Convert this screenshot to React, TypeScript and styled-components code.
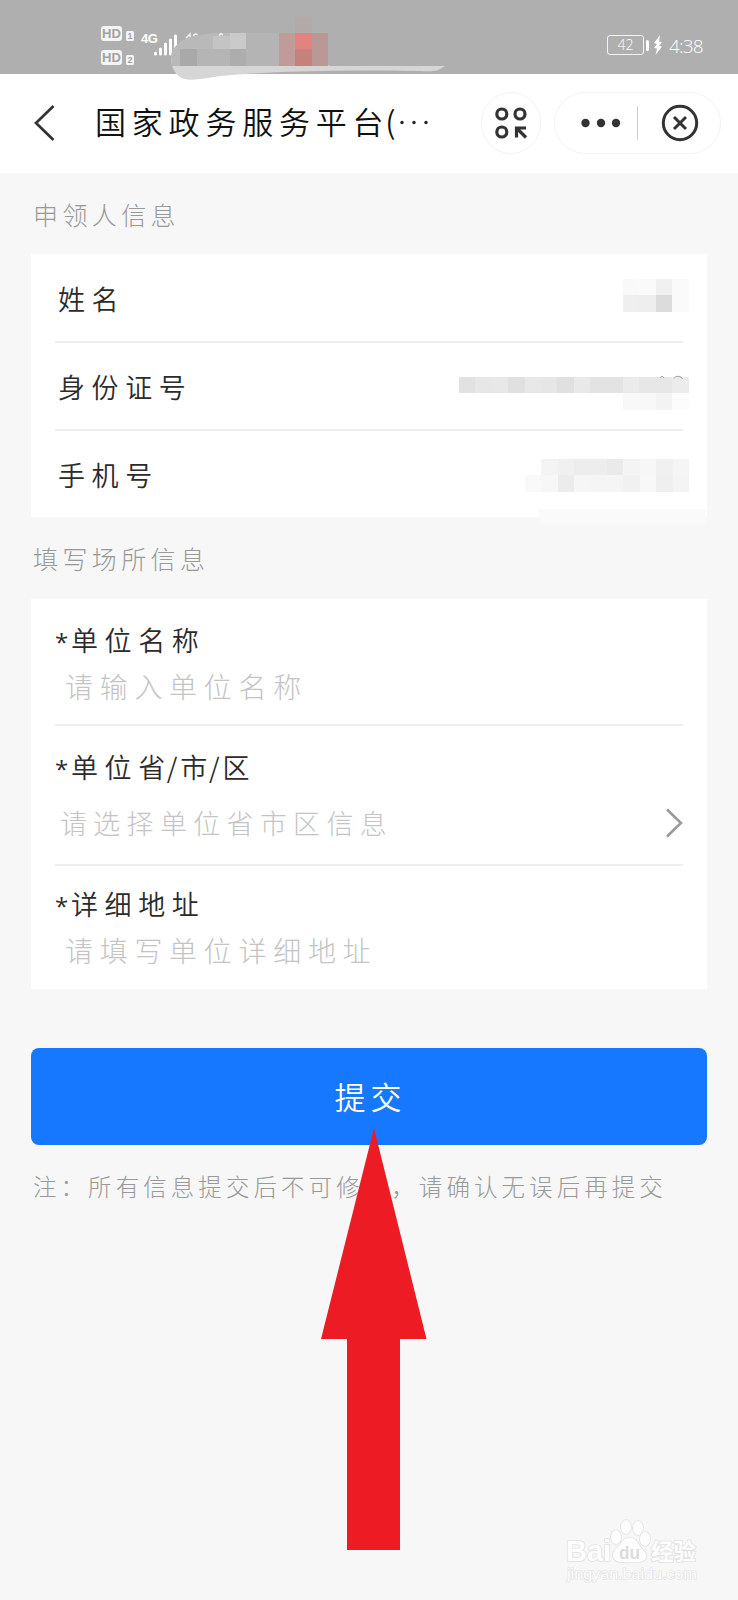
import React from 'react';
import styled, { createGlobalStyle } from 'styled-components';

const Global = createGlobalStyle`
  * { box-sizing: border-box; }
  body {
    margin: 0;
    background: #f7f7f7;
    font-family: "Noto Sans CJK SC", sans-serif;
    font-weight: 300;
  }
`;

const Page = styled.div`
  position: relative;
  width: 738px;
  height: 1600px;
  overflow: hidden;
  background: #f7f7f7;
`;

const StatusBar = styled.div`
  display: flex;
  justify-content: space-between;
  height: 74px;
  padding: 26px 33px 0 101px;
  background: #afafaf;
  color: #fff;
`;

const StatusGroup = styled.div`
  display: flex;
  align-items: flex-start;
`;

const SimColumn = styled.div`
  display: flex;
  flex-direction: column;
  gap: 9px;
`;

const SimRow = styled.div`
  display: flex;
  align-items: flex-end;
  gap: 4px;
  height: 15px;
`;

const Badge = styled.span<{ $small?: boolean }>`
  display: flex;
  align-items: center;
  justify-content: center;
  width: ${p => (p.$small ? 8 : 21)}px;
  height: ${p => (p.$small ? 10 : 15)}px;
  border-radius: ${p => (p.$small ? 1.5 : 3)}px;
  background: #f4f4f4;
  color: #a2a2a2;
  font: 700 ${p => (p.$small ? 9 : 13)}px/1 "Liberation Sans", sans-serif;
`;

const Network = styled.span`
  width: 13px;
  margin: 6px 0 0 7px;
  font: 700 13px/13px "Liberation Sans Narrow", "Liberation Sans", sans-serif;
  letter-spacing: -0.5px;
`;

const Bars = styled.svg`
  margin: 7px 0 0 -1px;
`;

const Battery = styled.div`
  width: 37px;
  height: 20px;
  margin-top: 9px;
  border: 1.5px solid #f3f3f3;
  border-radius: 3px;
  font: 300 14px/17px "Open Sans", sans-serif;
  text-align: center;
`;

const Power = styled.svg`
  margin: 9px 0 0 2px;
`;

const Clock = styled.span`
  width: 36px;
  margin: 10px 0 0 5px;
  font: 300 19px/21px "Open Sans", sans-serif;
  letter-spacing: -0.8px;
  white-space: nowrap;
`;

const Smear = styled.svg`
  position: absolute;
  left: 0;
  top: 0;
`;

const Header = styled.header`
  display: flex;
  align-items: center;
  height: 99px;
  padding: 0 17px 2px 33px;
  background: #fff;
`;

const Title = styled.h1`
  display: flex;
  flex: 1;
  margin: -4px 0 0 38px;
  font-size: 31px;
  font-weight: 350;
  line-height: 44px;
  letter-spacing: 5.8px;
  color: #111;
  white-space: nowrap;
`;

const Tight = styled.span`
  letter-spacing: 1.6px;
`;

const TitleDots = styled.svg`
  margin: 21px 0 0 1px;
`;

const RoundButton = styled.button<{ $wide?: boolean }>`
  display: flex;
  align-items: center;
  justify-content: center;
  width: ${p => (p.$wide ? 167 : 60)}px;
  height: 62px;
  margin: 0 0 0 ${p => (p.$wide ? 13 : 0)}px;
  padding: 0;
  border: 1px solid #f3f3f3;
  border-radius: 31px;
  background: #fff;
`;

const Main = styled.main`
  padding: 0 31px;
`;

const SectionTitle = styled.h2<{ $height: number }>`
  height: ${p => p.$height}px;
  margin: 0;
  padding-left: 2px;
  font-size: 25px;
  font-weight: 300;
  line-height: 82px;
  letter-spacing: 4.4px;
  color: #999;
`;

const Card = styled.section`
  padding: 0 24px;
  background: #fff;
`;

const Row = styled.div<{ $height: number; $last?: boolean }>`
  display: flex;
  align-items: center;
  justify-content: space-between;
  height: ${p => p.$height}px;
  padding-top: 4px;
  border-bottom: ${p => (p.$last ? 'none' : '2px solid #eee')};
`;

const Label = styled.span`
  margin-top: -2px;
  padding-left: 3px;
  font-size: 27px;
  font-weight: 350;
  line-height: 40px;
  letter-spacing: 6.6px;
  color: #2b2b2b;
`;

const Mosaic = styled.svg<{ $raise: number }>`
  margin: 0 -6px ${p => p.$raise}px 0;
`;

const Field = styled.div<{ $height: number; $top: number; $last?: boolean }>`
  height: ${p => p.$height}px;
  padding-top: ${p => p.$top}px;
  border-bottom: ${p => (p.$last ? 'none' : '2px solid #eee')};
`;

const FieldLabel = styled.div`
  display: flex;
  align-items: center;
  height: 40px;
  font-size: 27px;
  font-weight: 350;
  line-height: 40px;
  letter-spacing: 6.6px;
  color: #2b2b2b;
  white-space: nowrap;
`;

const Star = styled.span`
  width: 16px;
  padding-top: 3px;
  font: 400 24px/37px "Open Sans", sans-serif;
  letter-spacing: 0;
`;

const Slash = styled.span`
  width: 13.5px;
  letter-spacing: 0;
`;

const Placeholder = styled.div<{ $select?: boolean }>`
  display: flex;
  align-items: center;
  justify-content: space-between;
  height: 40px;
  margin-top: ${p => (p.$select ? 16 : 6)}px;
  padding-left: ${p => (p.$select ? 5 : 10)}px;
  font-size: ${p => (p.$select ? 27 : 28)}px;
  line-height: 40px;
  letter-spacing: ${p => (p.$select ? 6.3 : 6.7)}px;
  color: #c4c4c4;
`;

const Submit = styled.button`
  display: block;
  width: 100%;
  height: 97px;
  margin-top: 59px;
  padding: 0 0 2px 3px;
  border: 0;
  border-radius: 8px;
  background: #1678ff;
  color: #fff;
  font: 350 31px/94px "Noto Sans CJK SC", sans-serif;
  letter-spacing: 5px;
`;

const Note = styled.p`
  margin: 21px 0 0 2px;
  font-size: 23.5px;
  line-height: 40px;
  letter-spacing: 4.06px;
  color: #999;
  white-space: nowrap;
`;

const Arrow = styled.svg`
  position: absolute;
  left: 321px;
  top: 1128px;
`;

const Watermark = styled.svg`
  position: absolute;
  left: 560px;
  top: 1512px;
`;

const CELL = 16.4;

function Pixels({ rows, width, height, raise = 0 }: { rows: string[][]; width: number; height: number; raise?: number }) {
  return (
    <Mosaic width={width} height={height} $raise={raise} shapeRendering="crispEdges" overflow="visible">
      {rows.map((row, y) =>
        row.map((c, x) =>
          c ? <rect key={`${x}-${y}`} x={x * CELL} y={y * CELL} width={CELL} height={CELL} fill={`#${c}${c}${c}`} /> : null,
        ),
      )}
    </Mosaic>
  );
}

const nameCells = [
  ['f9', 'fa', 'f0', 'fa'],
  ['ef', 'ee', 'dc', 'fa'],
];

const idCells = [
  ['e2', 'e7', 'e8', 'e0', 'e8', 'e6', 'e0', 'e9', 'e3', 'e3', 'eb', 'e7', 'e7', 'ec'],
  ['', '', '', '', '', '', '', '', '', '', 'f8', 'f8', 'f3', 'fc'],
];

const phoneCells = [
  ['', 'f4', 'f0', 'ed', 'ed', 'ea', 'f4', 'f7', 'f0', 'f5'],
  ['f9', 'f7', 'ec', 'f6', 'f5', 'f5', 'f1', 'f8', 'ef', 'f4'],
];

function StatusSmear() {
  return (
    <Smear width="460" height="84">
      <path d="M171 57 C172 46 181 40 196 36 L280 33 L330 36 V66 L445 66 C438 71 433 72 420 71 C350 70 290 70 220 76 C202 79 187 82 180 77 C174 73 171 66 171 57Z" fill="#d6d6d6" />
      <path d="M171 57 C172 46 181 40 196 36 L213 33 H279 V66 H172Z" fill="#b9b9b9" />
      <path d="M328 30 H446 V65.500 H328Z" fill="#afafaf" />
      <g shapeRendering="crispEdges">
        <rect x="180" y="49" width="17" height="17" fill="#a9a9a9" />
        <rect x="197" y="49" width="33" height="17" fill="#b5b5b5" />
        <rect x="230" y="49" width="16" height="17" fill="#adadad" />
        <rect x="213" y="36" width="17" height="13" fill="#c4c4c4" />
        <rect x="230" y="33" width="16" height="16" fill="#cacaca" />
        <rect x="246" y="33" width="33" height="33" fill="#b4b4b4" />
        <rect x="279" y="33" width="16" height="33" fill="#bf9b99" />
        <rect x="295" y="17" width="17" height="16" fill="#b3a9a8" />
        <rect x="295" y="33" width="17" height="16" fill="#e1847f" />
        <rect x="295" y="49" width="17" height="17" fill="#c6807d" />
        <rect x="312" y="33" width="16" height="33" fill="#b99896" />
      </g>
      <path d="M186 38 L190 34 V37 M193.500 36 C194 33.500 197 33.500 197.500 35 M219 35.500 L221 33.500 L223 35" stroke="#f2f2f2" strokeWidth="1.500" fill="none" />
    </Smear>
  );
}

/* Soft brush marks left around the hidden personal details. */
const CardSmear = styled.svg`
  position: absolute;
  left: 530px;
  top: 370px;
`;

export default function App() {
  return (
    <Page>
      <Global />
      <StatusBar>
        <StatusGroup>
          <SimColumn>
            <SimRow><Badge>HD</Badge><Badge $small>1</Badge></SimRow>
            <SimRow><Badge>HD</Badge><Badge $small>2</Badge></SimRow>
          </SimColumn>
          <Network>4G</Network>
          <Bars width="26" height="24" stroke="#fff" strokeWidth="3" strokeLinecap="round">
            <path d="M2.500 20v1M7.500 16v5M12.500 11v10M17.500 7v14M22.500 3v18" />
          </Bars>
        </StatusGroup>
        <StatusGroup>
          <Battery>42</Battery>
          <Power width="18" height="21" fill="#fff">
            <rect x="0" y="5" width="3" height="11" rx="1.500" />
            <path d="M14 0 L8 8 L11 9 L8 13 L11 13.500 L9.500 20 L16 11.500 L13 11 L16 7 L13 6.500Z" />
          </Power>
          <Clock>4:38</Clock>
        </StatusGroup>
      </StatusBar>

      <Header>
        <svg width="24" height="38" fill="none" stroke="#333" strokeWidth="2.700">
          <path d="M20.500 2 L3 19 L20.500 36" />
        </svg>
        <Title>
          国家政务服务平<Tight>台(</Tight>
          <TitleDots width="30" height="5" fill="#222">
            <circle cx="4" cy="2.500" r="1.700" /><circle cx="16" cy="2.500" r="1.700" /><circle cx="28" cy="2.500" r="1.700" />
          </TitleDots>
        </Title>
        <RoundButton aria-label="apps">
          <svg width="36" height="36" fill="none" stroke="#333" strokeWidth="3.200">
            <circle cx="8.800" cy="9" r="5" />
            <circle cx="27" cy="9" r="5" />
            <circle cx="8.800" cy="27" r="5" />
            <path d="M23.500 32.500 V23 H33 M23.500 23 L33 32.500" />
          </svg>
        </RoundButton>
        <RoundButton $wide aria-label="menu">
          <svg width="165" height="60" fill="none" stroke="#333">
            <g fill="#333" stroke="none">
              <circle cx="30.500" cy="30" r="4.200" /><circle cx="46" cy="30" r="4.200" /><circle cx="61" cy="30" r="4.200" />
            </g>
            <path d="M82.500 13 V47" stroke="#ccc" />
            <circle cx="125" cy="30" r="16.700" strokeWidth="3" />
            <path d="M119 24 L131 36 M131 24 L119 36" strokeWidth="3" />
          </svg>
        </RoundButton>
      </Header>

      <Main>
        <SectionTitle $height={81}>申领人信息</SectionTitle>
        <Card>
          <Row $height={89}>
            <Label>姓名</Label>
            <Pixels rows={nameCells} width={66} height={33} raise={8} />
          </Row>
          <Row $height={88}>
            <Label>身份证号</Label>
            <Pixels rows={idCells} width={230} height={33} raise={-11} />
          </Row>
          <Row $height={86} $last>
            <Label>手机号</Label>
            <Pixels rows={phoneCells} width={164} height={33} raise={2} />
          </Row>
        </Card>
        <SectionTitle $height={82}>填写场所信息</SectionTitle>
        <Card>
          <Field $height={127} $top={21}>
            <FieldLabel><Star>*</Star>单位名称</FieldLabel>
            <Placeholder>请输入单位名称</Placeholder>
          </Field>
          <Field $height={140} $top={21}>
            <FieldLabel><Star>*</Star>单位<Tight>省</Tight><Slash>/</Slash><Tight>市</Tight><Slash>/</Slash>区</FieldLabel>
            <Placeholder $select>
              请选择单位省市区信息
              <svg width="18" height="32" fill="none" stroke="#999" strokeWidth="2.500">
                <path d="M2 2.500 L16 16 L2 29.500" />
              </svg>
            </Placeholder>
          </Field>
          <Field $height={123} $top={18} $last>
            <FieldLabel><Star>*</Star>详细地址</FieldLabel>
            <Placeholder>请填写单位详细地址</Placeholder>
          </Field>
        </Card>
        <Submit>提交</Submit>
        <Note>注：所有信息提交后不可修改，请确认无误后再提交</Note>
      </Main>

      <StatusSmear />
      <CardSmear width="180" height="156">
        <path d="M8 139 H176 V154 H12 C10 150 8 147 8 139Z" fill="#fafafa" />
        <path d="M130 8 C131 6 133 6 134 8 M144 8.500 C145 5.500 151 5.500 152.500 9" fill="none" stroke="#999" />
      </CardSmear>
      <Arrow width="106" height="423" fill="#ed1c24">
        <path d="M53 0 L105.500 211 H79 V422 H26 V211 H0Z" />
      </Arrow>
      <Watermark width="150" height="80" fill="#fdfdfd" stroke="#e2e2e2" strokeWidth="1.600" paintOrder="stroke">
        <g fontFamily="Liberation Sans" fontWeight="700">
          <text x="6" y="49" fontSize="30" textLength="45" lengthAdjust="spacingAndGlyphs">Bai</text>
          <ellipse cx="56" cy="25" rx="5" ry="7" />
          <ellipse cx="66" cy="15" rx="5" ry="7" />
          <ellipse cx="78" cy="16" rx="5" ry="7" />
          <ellipse cx="85" cy="27" rx="5" ry="7" />
          <path d="M70 26 C62 26 60 34 55 38 C50 43 54 50 61 50 H78 C87 50 89 43 83 38 C79 34 77 26 70 26Z" />
          <text x="59" y="47" fontSize="18" textLength="21" lengthAdjust="spacingAndGlyphs" fill="#dcdcdc" stroke="none">du</text>
        </g>
        <text x="91" y="48" fontFamily="Noto Sans CJK SC" fontWeight="700" fontSize="22.500">经验</text>
        <text x="7" y="67" fontFamily="Liberation Sans" fontWeight="400" fontSize="15.500" strokeWidth="1.200" textLength="130" lengthAdjust="spacingAndGlyphs">jingyan.baidu.com</text>
      </Watermark>
    </Page>
  );
}
